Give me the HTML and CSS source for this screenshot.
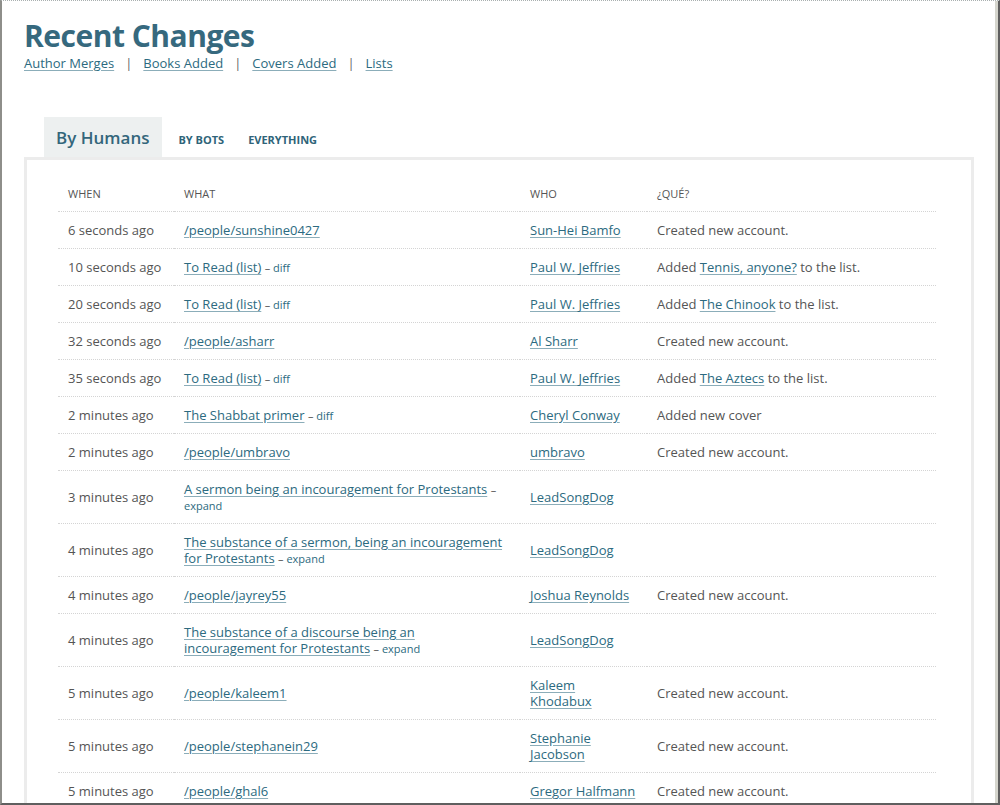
FILE: index.html
```html
<!DOCTYPE html>
<html lang="en">
<head>
<meta charset="utf-8">
<title>Recent Changes</title>
<link rel="stylesheet" href="styles.css">
</head>
<body>
<div class="page">
  <h1 class="title">Recent Changes</h1>
  <div class="subnav">
    <a href="#" class="link">Author Merges</a><span class="sep">|</span><a href="#" class="link">Books Added</a><span class="sep">|</span><a href="#" class="link">Covers Added</a><span class="sep">|</span><a href="#" class="link">Lists</a>
  </div>
  <div class="tabs">
    <a href="#" class="tab active">By Humans</a>
    <a href="#" class="tab first">By Bots</a>
    <a href="#" class="tab">Everything</a>
  </div>
  <div class="panel">
    <table class="changes">
      <colgroup>
        <col class="c-when"><col class="c-what"><col class="c-who"><col class="c-que">
      </colgroup>
      <thead>
        <tr><th>When</th><th>What</th><th>Who</th><th>¿Qué?</th></tr>
      </thead>
      <tbody>
        <tr><td>6 seconds ago</td><td><a href="#" class="link">/people/sunshine0427</a></td><td><a href="#" class="link">Sun-Hei Bamfo</a></td><td>Created new account.</td></tr>
        <tr><td>10 seconds ago</td><td><a href="#" class="link">To Read (list)</a> <span class="meta">– <a href="#" class="small">diff</a></span></td><td><a href="#" class="link">Paul W. Jeffries</a></td><td>Added <a href="#" class="link">Tennis, anyone?</a> to the list.</td></tr>
        <tr><td>20 seconds ago</td><td><a href="#" class="link">To Read (list)</a> <span class="meta">– <a href="#" class="small">diff</a></span></td><td><a href="#" class="link">Paul W. Jeffries</a></td><td>Added <a href="#" class="link">The Chinook</a> to the list.</td></tr>
        <tr><td>32 seconds ago</td><td><a href="#" class="link">/people/asharr</a></td><td><a href="#" class="link">Al Sharr</a></td><td>Created new account.</td></tr>
        <tr><td>35 seconds ago</td><td><a href="#" class="link">To Read (list)</a> <span class="meta">– <a href="#" class="small">diff</a></span></td><td><a href="#" class="link">Paul W. Jeffries</a></td><td>Added <a href="#" class="link">The Aztecs</a> to the list.</td></tr>
        <tr><td>2 minutes ago</td><td><a href="#" class="link">The Shabbat primer</a> <span class="meta">– <a href="#" class="small">diff</a></span></td><td><a href="#" class="link">Cheryl Conway</a></td><td>Added new cover</td></tr>
        <tr><td>2 minutes ago</td><td><a href="#" class="link">/people/umbravo</a></td><td><a href="#" class="link">umbravo</a></td><td>Created new account.</td></tr>
        <tr><td>3 minutes ago</td><td><a href="#" class="link">A sermon being an incouragement for Protestants</a> <span class="meta">– <a href="#" class="small">expand</a></span></td><td><a href="#" class="link">LeadSongDog</a></td><td></td></tr>
        <tr><td>4 minutes ago</td><td><a href="#" class="link">The substance of a sermon, being an incouragement for Protestants</a> <span class="meta">– <a href="#" class="small">expand</a></span></td><td><a href="#" class="link">LeadSongDog</a></td><td></td></tr>
        <tr><td>4 minutes ago</td><td><a href="#" class="link">/people/jayrey55</a></td><td><a href="#" class="link">Joshua Reynolds</a></td><td>Created new account.</td></tr>
        <tr><td>4 minutes ago</td><td><a href="#" class="link">The substance of a discourse being an incouragement for Protestants</a> <span class="meta">– <a href="#" class="small">expand</a></span></td><td><a href="#" class="link">LeadSongDog</a></td><td></td></tr>
        <tr><td>5 minutes ago</td><td><a href="#" class="link">/people/kaleem1</a></td><td><a href="#" class="link">Kaleem Khodabux</a></td><td>Created new account.</td></tr>
        <tr><td>5 minutes ago</td><td><a href="#" class="link">/people/stephanein29</a></td><td><a href="#" class="link">Stephanie Jacobson</a></td><td>Created new account.</td></tr>
        <tr><td>5 minutes ago</td><td><a href="#" class="link">/people/ghal6</a></td><td><a href="#" class="link">Gregor Halfmann</a></td><td>Created new account.</td></tr>
        <tr><td>6 minutes ago</td><td><a href="#" class="link">/people/mreads</a></td><td><a href="#" class="link">M. Reads</a></td><td>Created new account.</td></tr>
      </tbody>
    </table>
  </div>
</div>
</body>
</html>
```

FILE: styles.css
```css
html, body {
  margin: 0;
  padding: 0;
  background: #ffffff;
}

body {
  font-family: "Open Sans", "Noto Sans", "DejaVu Sans", sans-serif;
  font-size: 13px;
  color: #555555;
}

.page {
  width: 1000px;
  height: 805px;
  box-sizing: border-box;
  border-left: 2px solid #8e8e8a;
  border-top: 1px dotted #a9b0b0;
  border-right: 2px solid #5f5f5f;
  border-bottom: 2px solid #5f5f5f;
  box-shadow: inset -3px 0 0 #d5d5cd;
  overflow: hidden;
  padding: 17px 0 0 22px;
}

.title {
  margin: 0;
  font-size: 30px;
  line-height: 36px;
  font-weight: 700;
  color: #36697e;
  letter-spacing: -0.5px;
}

.subnav {
  margin-top: 1px;
  line-height: 16px;
}

.sep {
  margin: 0 11px;
  color: #666666;
}

.link {
  color: #2c6a80;
  text-decoration: underline;
  text-decoration-color: rgba(44, 106, 128, 0.55);
  text-underline-offset: 2px;
}

.small {
  color: #2c6a80;
  text-decoration: none;
  font-size: 11px;
}

.meta {
  font-size: 11px;
  line-height: 12px;
  color: #555555;
}

.tabs {
  display: flex;
  align-items: baseline;
  margin: 46px 0 0 20px;
}

.tab {
  font-size: 11px;
  font-weight: 700;
  text-transform: uppercase;
  color: #2f6479;
  text-decoration: none;
  padding: 0 12px;
}

.tab.first {
  margin-left: 4px;
}

.tab.active {
  font-size: 17px;
  line-height: 24px;
  font-weight: 600;
  text-transform: none;
  color: #33667b;
  background: #edf0f0;
  padding: 9px 13px 7px 12px;
}

.panel {
  width: 950px;
  box-sizing: border-box;
  border: 3px solid #ececec;
  border-bottom: none;
  padding: 16px 35px 0 31px;
}

.changes {
  width: 100%;
  border-collapse: collapse;
  table-layout: fixed;
}

.c-when { width: 116px; }
.c-what { width: 346px; }
.c-who { width: 127px; }

.changes th {
  font-size: 11px;
  font-weight: 400;
  text-transform: uppercase;
  text-align: left;
  color: #555555;
  line-height: 16px;
  padding: 10px 10px 9px;
  border-bottom: 1px dotted #d4d4d4;
}

.changes td {
  padding: 10px;
  line-height: 16px;
  vertical-align: middle;
  border-bottom: 1px dotted #d4d4d4;
}
```
